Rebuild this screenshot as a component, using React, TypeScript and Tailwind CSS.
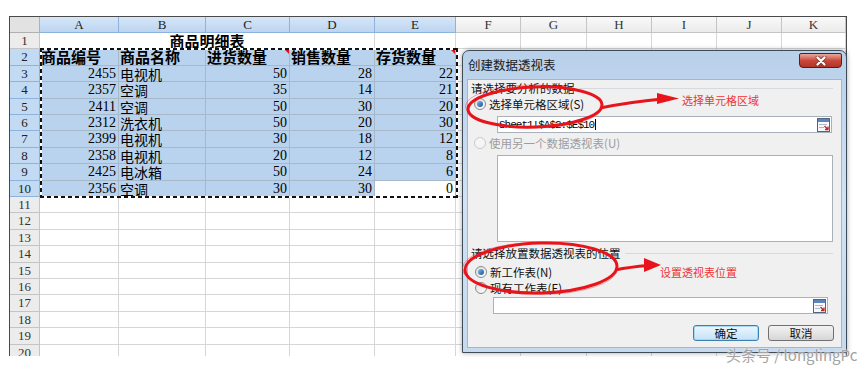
import React from "react";

const COLS = ["A", "B", "C", "D", "E", "F", "G", "H", "I", "J", "K"];
const HEAD = ["商品编号", "商品名称", "进货数量", "销售数量", "存货数量"];
const DATA: string[][] = [
  ["2455", "电视机", "50", "28", "22"],
  ["2357", "空调", "35", "14", "21"],
  ["2411", "空调", "50", "30", "20"],
  ["2312", "洗衣机", "50", "20", "30"],
  ["2399", "电视机", "30", "18", "12"],
  ["2358", "电视机", "20", "12", "8"],
  ["2425", "电冰箱", "50", "24", "6"],
  ["2356", "空调", "30", "30", "0"],
];

const colHead =
  "flex items-center justify-center border-r border-b border-[#c4c4c4] bg-linear-to-b from-[#f9f9f9] to-[#ebebeb] text-[13px] text-[#333] [font-family:'Liberation_Serif',serif]";
const selColHead =
  "flex items-center justify-center border-r border-b border-[#8db2de] bg-linear-to-b from-[#d6e6f8] to-[#bcd5f0] text-[13px] text-[#222] [font-family:'Liberation_Serif',serif]";
const rowHead =
  "flex items-center justify-center border-r border-b border-[#c4c4c4] bg-[#ececec] text-[13px] text-[#333] [font-family:'Liberation_Serif',serif]";
const selRowHead =
  "flex items-center justify-center border-r border-b border-[#8db2de] bg-[#c3daf3] text-[13px] text-[#222] [font-family:'Liberation_Serif',serif]";
const plain = "border-r border-b border-[#d6d6d6] bg-white";
const selNum =
  "flex items-center justify-end pr-[2px] border-r border-b border-[#a7b8c9] bg-[#b9d3ee] text-[14px] leading-[16px] text-black [font-family:'Liberation_Serif',serif]";
const selText =
  "flex items-center pl-[1px] border-r border-b border-[#a7b8c9] bg-[#b9d3ee] text-[14px] leading-[16px] text-black [font-family:'Noto_Sans_CJK_SC',sans-serif]";
const selHead =
  "relative flex items-center pl-[1px] border-r border-b border-[#a7b8c9] bg-[#b9d3ee] text-[15px] leading-[16px] font-bold text-black [font-family:'Noto_Sans_CJK_SC',sans-serif]";
const whiteNum =
  "flex items-center justify-end pr-[2px] border-r border-b border-[#a7b8c9] bg-white text-[14px] leading-[16px] text-black [font-family:'Liberation_Serif',serif]";

function Tri() {
  return (
    <span className="absolute top-0 right-0 w-0 h-0 border-l-[5px] border-l-transparent border-t-[5px] border-t-[#e01010]" />
  );
}

function Sheet() {
  const cells: React.ReactNode[] = [];
  cells.push(<div key="corner" className="border-r border-b border-[#b0b0b0] bg-[#e2e2e2]" />);
  COLS.forEach((c, i) =>
    cells.push(
      <div key={"h" + c} className={i < 5 ? selColHead : colHead}>
        {c}
      </div>
    )
  );
  for (let r = 1; r <= 20; r++) {
    const sel = r >= 2 && r <= 10;
    cells.push(
      <div key={"r" + r} className={sel ? selRowHead : rowHead}>
        {r}
      </div>
    );
    if (r === 1) {
      cells.push(
        <div
          key="title"
          className="col-span-4 flex items-center justify-center border-r border-b border-[#d6d6d6] bg-white text-[15px] leading-[16px] font-bold text-black [font-family:'Noto_Sans_CJK_SC',sans-serif]"
        >
          商品明细表
        </div>
      );
      for (let c = 4; c < 11; c++) cells.push(<div key={"c1-" + c} className={plain} />);
    } else if (r === 2) {
      HEAD.forEach((h, i) =>
        cells.push(
          <div key={"hd" + i} className={selHead}>
            {h}
            {(i === 2 || i === 4) && <Tri />}
          </div>
        )
      );
      for (let c = 5; c < 11; c++) cells.push(<div key={"c2-" + c} className={plain} />);
    } else if (sel) {
      const d = DATA[r - 3];
      cells.push(<div key={"a" + r} className={selNum}>{d[0]}</div>);
      cells.push(<div key={"b" + r} className={selText}>{d[1]}</div>);
      cells.push(<div key={"c" + r} className={selNum}>{d[2]}</div>);
      cells.push(<div key={"d" + r} className={selNum}>{d[3]}</div>);
      cells.push(
        <div key={"e" + r} className={r === 10 ? whiteNum : selNum}>
          {d[4]}
        </div>
      );
      for (let c = 5; c < 11; c++) cells.push(<div key={"c" + r + "-" + c} className={plain} />);
    } else {
      for (let c = 0; c < 11; c++) cells.push(<div key={"c" + r + "-" + c} className={plain} />);
    }
  }
  return (
    <div className="relative w-[838px] h-[340px] overflow-hidden border-l border-t border-r border-[#4a4a4a]">
      <div className="grid grid-cols-[30px_79px_87px_84px_85px_81px_65px_66px_65px_65px_65px_64px] grid-rows-[16px_16px_17px_16px_17px_16px_16px_17px_16px_17px_16px_16px_17px_16px_17px_16px_16px_17px_16px_17px_16px]">
        {cells}
      </div>
      <div className="absolute left-[30px] top-[31px] w-[418px] h-[150px]">
        <div className="absolute left-0 right-0 top-0 h-[2px] bg-[repeating-linear-gradient(90deg,#111_0px,#111_4px,#fff_4px,#fff_7px)]" />
        <div className="absolute left-0 right-0 bottom-0 h-[2px] bg-[repeating-linear-gradient(90deg,#111_0px,#111_4px,#fff_4px,#fff_7px)]" />
        <div className="absolute top-0 bottom-0 left-0 w-[2px] bg-[repeating-linear-gradient(180deg,#111_0px,#111_4px,#fff_4px,#fff_7px)]" />
        <div className="absolute top-0 bottom-0 right-0 w-[2px] bg-[repeating-linear-gradient(180deg,#111_0px,#111_4px,#fff_4px,#fff_7px)]" />
      </div>
    </div>
  );
}

function Radio({ checked, disabled }: { checked?: boolean; disabled?: boolean }) {
  return (
    <span
      className={
        disabled
          ? "flex items-center justify-center w-[12px] h-[12px] rounded-full border border-[#c9c9c9] bg-[#f5f5f5]"
          : "flex items-center justify-center w-[12px] h-[12px] rounded-full border border-[#8a8a8a] bg-linear-to-br from-[#dcdcdc] to-[#ffffff]"
      }
    >
      {checked && <span className="w-[6px] h-[6px] rounded-full bg-linear-to-br from-[#7fc0f0] to-[#18528f]" />}
    </span>
  );
}

function RangeIcon() {
  return (
    <svg width="13" height="14" viewBox="0 0 13 14">
      <rect x="0.5" y="0.5" width="12" height="13" fill="#f7f9fc" stroke="#50667f" />
      <rect x="1" y="1" width="11" height="3" fill="#5c86bb" />
      <line x1="2" y1="6.5" x2="10" y2="6.5" stroke="#a9b9ca" />
      <line x1="2" y1="9.5" x2="7" y2="9.5" stroke="#a9b9ca" />
      <path d="M7.5 8 L11 11.5 M11 8.5 L11 11.5 L8 11.5" stroke="#c4261d" strokeWidth="1.3" fill="none" />
    </svg>
  );
}

const dlgFont = "[font-family:'Noto_Sans_CJK_SC',sans-serif]";

function Dialog() {
  return (
    <div className="absolute left-[462px] top-[50px] w-[385px] h-[303px] flex flex-col rounded-t-[7px] border border-[#3e4c5a] bg-linear-to-b from-[#b8d0ea] via-[#d0e2f4] to-[#c6d9ed] px-[4px] shadow-[0_0_5px_rgba(0,0,0,0.35)]">
      <div className="relative h-[28px] flex items-center pl-[1px] pb-[1px]">
        <span className={"text-[12.5px] leading-[16px] text-[#1a1a1a] " + dlgFont}>创建数据透视表</span>
        <div className="absolute top-[2px] right-0 w-[43px] h-[15px] rounded-b-[4px] rounded-t-[2px] border border-[#5b1c17] bg-linear-to-b from-[#e6a89e] via-[#c9483b] to-[#b13428] flex items-center justify-center">
          <svg width="14" height="10" viewBox="0 0 14 10">
            <path d="M3.5 1.5 L10.5 8.5 M10.5 1.5 L3.5 8.5" stroke="#6b2a25" strokeWidth="4" strokeLinecap="round" opacity="0.6" />
            <path d="M3.5 1.5 L10.5 8.5 M10.5 1.5 L3.5 8.5" stroke="#ffffff" strokeWidth="2.2" strokeLinecap="round" />
          </svg>
        </div>
      </div>
      <div className={"h-[269px] flex flex-col border border-[#a7b5c4] bg-[#f0f0f0] text-[11.5px] leading-[14px] text-[#111] " + dlgFont}>
        <div className="mt-[1px] h-[14px] flex items-center pl-[3px] pr-[8px]">
          <span>请选择要分析的数据</span>
          <span className="flex-1 h-px bg-[#d5dadf] ml-[4px]" />
        </div>
        <div className="mt-[1px] h-[16px] flex items-center pl-[6px] gap-[3px]">
          <Radio checked />
          <span>选择单元格区域(S)</span>
        </div>
        <div className="mt-[4px] ml-[29px] w-[335px] h-[17px] flex items-center border border-[#a9b1ba] bg-white pl-[1px] pr-[1px]">
          <span className="text-[11px] leading-[14px] tracking-[-1px] [font-family:'Liberation_Mono',monospace] text-black">
            Sheet1!$A$2:$E$10
          </span>
          <span className="w-px h-[11px] bg-black ml-[1px]" />
          <span className="ml-auto flex">
            <RangeIcon />
          </span>
        </div>
        <div className="mt-[2px] h-[16px] flex items-center pl-[6px] gap-[3px] text-[#9d9d9d]">
          <Radio disabled />
          <span>使用另一个数据透视表(U)</span>
        </div>
        <div className="mt-[4px] ml-[29px] w-[336px] h-[87px] border border-[#a9b1ba] bg-white" />
        <div className="mt-[4px] h-[14px] flex items-center pl-[3px] pr-[8px]">
          <span>请选择放置数据透视表的位置</span>
          <span className="flex-1 h-px bg-[#d5dadf] ml-[4px]" />
        </div>
        <div className="mt-[4px] h-[16px] flex items-center pl-[7px] gap-[3px]">
          <Radio checked />
          <span>新工作表(N)</span>
        </div>
        <div className="h-[16px] flex items-center pl-[7px] gap-[3px]">
          <Radio />
          <span>现有工作表(E)</span>
        </div>
        <div className="mt-[1px] ml-[25px] w-[335px] h-[17px] flex items-center border border-[#a9b1ba] bg-white pr-[1px]">
          <span className="ml-auto flex">
            <RangeIcon />
          </span>
        </div>
        <div className="mt-[11px] h-[16px] flex justify-end gap-[9px] pr-[7px]">
          <div className="w-[66px] h-[16px] flex items-center justify-center rounded-[3px] border border-[#3c7fb1] bg-linear-to-b from-[#edf6fd] to-[#c4e3f7] shadow-[inset_0_0_0_1px_#a8d8f6]">
            确定
          </div>
          <div className="w-[66px] h-[16px] flex items-center justify-center rounded-[3px] border border-[#707070] bg-linear-to-b from-[#f3f3f3] to-[#d6d6d6]">
            取消
          </div>
        </div>
      </div>
    </div>
  );
}

function Annotations() {
  return (
    <>
      <svg className="absolute left-0 top-0 pointer-events-none" width="859" height="370" viewBox="0 0 859 370">
        <ellipse cx="535" cy="107" rx="67" ry="20" fill="none" stroke="#e8141b" strokeWidth="3" transform="rotate(-2 535 107)" />
        <ellipse cx="534" cy="106.5" rx="68.5" ry="21.5" fill="none" stroke="#e8141b" strokeWidth="0.8" opacity="0.45" />
        <path d="M600 108 Q630 102 662 99" stroke="#e8141b" strokeWidth="3" fill="none" />
        <polygon points="657,93 679,98.5 657,104" fill="#e8141b" />
        <ellipse cx="541" cy="268" rx="76" ry="25" fill="none" stroke="#e8141b" strokeWidth="3" transform="rotate(-1.5 541 268)" />
        <ellipse cx="540" cy="268.5" rx="77.5" ry="26" fill="none" stroke="#e8141b" strokeWidth="0.8" opacity="0.45" />
        <path d="M615 270 Q630 267 648 265.5" stroke="#e8141b" strokeWidth="3" fill="none" />
        <polygon points="644,258 661,265 644,272" fill="#e8141b" />
      </svg>
      <span className="absolute left-[682px] top-[92px] text-[11px] leading-[16px] text-[#ee3434] [font-family:'Noto_Sans_CJK_SC',sans-serif]">
        选择单元格区域
      </span>
      <span className="absolute left-[660px] top-[264px] text-[11px] leading-[16px] text-[#ee3434] [font-family:'Noto_Sans_CJK_SC',sans-serif]">
        设置透视表位置
      </span>
    </>
  );
}

export default function App() {
  return (
    <div className="relative w-[859px] h-[370px] overflow-hidden bg-white pl-[9px] pt-[16px]">
      <Sheet />
      <Dialog />
      <Annotations />
      <span className="absolute left-[726px] top-[346px] text-[15px] leading-[18px] text-[#a3a3a3] [text-shadow:0_0_2px_#ffffff] [font-family:'Noto_Sans_CJK_SC',sans-serif] whitespace-nowrap">
        头条号 / longlingPc
      </span>
    </div>
  );
}
